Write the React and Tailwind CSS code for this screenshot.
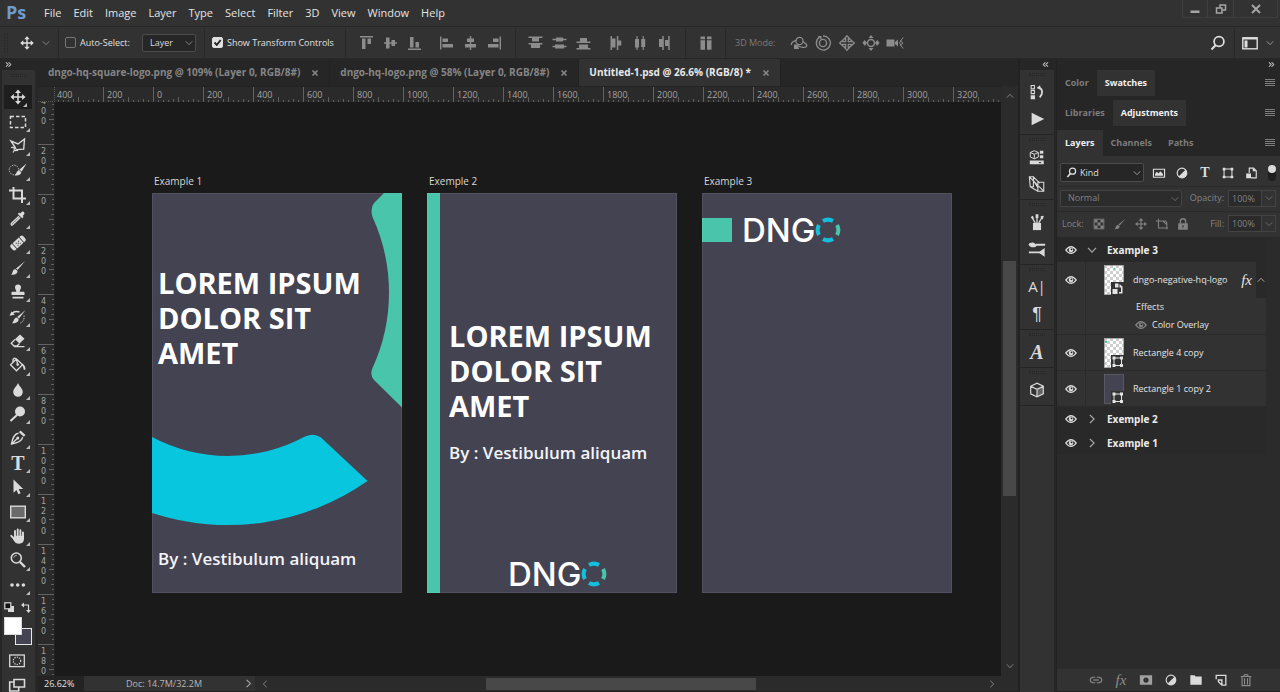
import { ChevronsLeft, ChevronsRight } from 'lucide-react'

const menus = ['File', 'Edit', 'Image', 'Layer', 'Type', 'Select', 'Filter', '3D', 'View', 'Window', 'Help']

const docTabs = [
  { name: 'dngo-hq-square-logo.png @ 109% (Layer 0, RGB/8#)' },
  { name: 'dngo-hq-logo.png @ 58% (Layer 0, RGB/8#)' },
  { name: 'Untitled-1.psd @ 26.6% (RGB/8) *', active: true },
]

const rulerX = [400, 200, 0, 200, 400, 600, 800, 1000, 1200, 1400, 1600, 1800, 2000, 2200, 2400, 2600, 2800, 3000, 3200]
const rulerY = [400, 200, 0, 200, 400, 600, 800, 1000, 1200, 1400, 1600, 1800]

const chevrons = {
  down: 'M.8 2.300L4 5.700l3.200-3.400',
  up: 'M.8 5.700L4 2.300l3.200 3.400',
  left: 'M5.700.8L2.300 4l3.400 3.200',
  right: 'M2.300.8L5.700 4 2.300 7.200',
}

function Icon({ size = 18, box = 18, className = '', children }) {
  return (
    <svg
      width={size}
      height={size}
      viewBox={`0 0 ${box} ${box}`}
      fill="currentColor"
      className={`shrink-0 ${className}`}
      aria-hidden="true"
    >
      {children}
    </svg>
  )
}

function Line({ d, w = 1.3, ...rest }) {
  return <path d={d} fill="none" stroke="currentColor" strokeWidth={w} {...rest} />
}

function Chevron({ dir = 'down', size = 8, className }) {
  return (
    <Icon size={size} box={8} className={className}>
      <Line d={chevrons[dir]} w={0.9} />
    </Icon>
  )
}

function MoveGlyph() {
  return (
    <>
      <Line d="M10 4.500v11M4.500 10h11" w={1.5} />
      <path d="M10 2.500l3 3.400H7zM10 17.500l3-3.400H7zM2.500 10l3.400-3v6zM17.500 10l-3.400-3v6z" />
    </>
  )
}

function BrushGlyph() {
  return (
    <>
      <path d="M17 3.200L9.500 12 8 10.600z" />
      <path d="M7.600 11.200l1.900 1.700c.2 2.400-2.600 4.200-6.500 3.800 1.500-.8 1.200-2.300 2-4 .6-1.100 1.600-1.500 2.600-1.500z" />
    </>
  )
}

/* toolbox, top to bottom, every glyph sits on a 20 x 20 grid */
const tools = [
  { name: 'Move', active: true, glyph: <MoveGlyph /> },
  {
    name: 'Marquee',
    glyph: <rect x="2.500" y="4.500" width="15" height="11" fill="none" stroke="currentColor" strokeWidth="1.500" strokeDasharray="3.500 2" />,
  },
  {
    name: 'Lasso',
    glyph: (
      <>
        <Line d="M7.500 12L3 5l7 3 6.500-5-.8 10.200-7.200.4M4 8.500" w={1.4} />
        <Line d="M3 11.500c3-.5 5.500 1 5.500 2.500s-3.500 0-2-1.500M8 14l2 .8M6.500 14L5 16.500" w={1.2} />
      </>
    ),
  },
  {
    name: 'Quick Selection',
    glyph: (
      <>
        <circle cx="6" cy="10" r="4.800" fill="none" stroke="currentColor" strokeDasharray="1.200 1.300" />
        <path d="M18.500 3.500l-4.800 8-2.400-1.700zM11 10.500l2.200 1.600c.2 2.500-2.500 3.900-6.600 3.400 1.900-.9 1.700-5 4.400-5z" />
      </>
    ),
  },
  { name: 'Crop', glyph: <Line d="M1 5.500h13V18M5.500 2v11.500h12.500" w={2} /> },
  {
    name: 'Eyedropper',
    glyph: (
      <>
        <path d="M12 4.500l2-1.700c1-1 3.200.8 2.300 2.200L14.800 7l.8.9-1.400 1.300-4.400-4.300 1.300-1.300z" />
        <Line d="M11 7.200L4.300 13.500c-1 1-1.700 1.500-1 2.300s1.400 0 2.300-1l6.600-6.400" w={1.4} />
      </>
    ),
  },
  {
    name: 'Healing Brush',
    glyph: (
      <g transform="rotate(-42 10 10)">
        <path d="M3.500 6.500H5v7H3.500a2 2 0 0 1-2-2v-3a2 2 0 0 1 2-2zM16.500 6.500H15v7h1.500a2 2 0 0 0 2-2v-3a2 2 0 0 0-2-2z" />
        <rect x="5.800" y="6.500" width="8.400" height="7" />
        <path d="M8 8.500h1v1H8zM11 8.500h1v1h-1zM9.500 9.800h1v1h-1zM8 11.200h1v1H8zM11 11.200h1v1h-1z" fill="#323232" />
      </g>
    ),
  },
  { name: 'Brush', glyph: <BrushGlyph /> },
  {
    name: 'Clone Stamp',
    glyph: <path d="M10 2.500a3 3 0 0 1 3 3c0 1.600-1.300 2.200-1.300 4.300h3.800c.8 0 1 .4 1 1V13h-13v-2.200c0-.6.200-1 1-1h3.800C8.300 7.700 7 7.100 7 5.500a3 3 0 0 1 3-3zM4.500 14.800h11v1.700h-11z" />,
  },
  {
    name: 'History Brush',
    glyph: (
      <>
        <path d="M17.500 3L11 11.500l-1.800-1.400zM8.600 10.500l2 1.600c.3 2.500-2 4.400-6.800 4.200 1.900-.9 1.900-5.400 4.800-5.800zM1.500 8.800l2-4.300 3.300 3.300z" />
        <Line d="M4 6.500c2-2.300 5-2.300 7.500-1.500" w={1.5} />
        <Line d="M16 8.500c.6 3.500-1 6.500-4 7.800" w={1} strokeDasharray="1.200 1.400" />
      </>
    ),
  },
  {
    name: 'Eraser',
    glyph: (
      <>
        <path d="M12 3.500l4.500 4.200-5 4.800-4.600-4.200z" />
        <Line d="M7 8.500l-3.800 3.700L6 15h3l2.500-2.500M6 15.600h10.500" w={1.3} />
      </>
    ),
  },
  {
    name: 'Paint Bucket',
    glyph: (
      <>
        <Line d="M8.500 4l6 5.800-6 6-6-6zM5 7c-.5-3 1-4.500 2.500-3.500S9 7 9.500 9" w={1.3} />
        <circle cx="9.700" cy="9.600" r="1.300" />
        <path d="M13 8.500c2 0 4 1.500 4.500 5 .2 1.800-1.800 2-2 .3-.2-2-.9-3.300-2.500-5.300z" />
      </>
    ),
  },
  { name: 'Blur', glyph: <path d="M10 3c1 3 4.800 5.500 4.800 9a4.800 4.800 0 0 1-9.600 0C5.200 8.500 9 6 10 3z" /> },
  {
    name: 'Dodge',
    glyph: (
      <>
        <circle cx="12" cy="7.500" r="5" />
        <Line d="M9 11l-6.500 6" w={2} />
      </>
    ),
  },
  {
    name: 'Pen',
    glyph: (
      <>
        <path d="M12.500 2.500l5 4.500-1.700 1.800-4.900-4.600z" />
        <Line d="M10.500 5.300C7.500 5.500 5 8 3.500 16c7.500-1.200 10.500-3.500 11.200-6.800M4 15.500l5-4.800" w={1.4} />
        <circle cx="9.800" cy="10" r="1.500" />
      </>
    ),
  },
  { name: 'Type', letter: true },
  { name: 'Path Selection', glyph: <path d="M5.500 2.500v13.200l3-2.700 1.900 4.200 2.200-1-1.900-4.100h4.500z" /> },
  {
    name: 'Rectangle',
    glyph: <rect x="2.700" y="4.200" width="14.600" height="11.600" fill="#6a6a6a" stroke="currentColor" strokeWidth="1.400" />,
  },
  {
    name: 'Hand',
    glyph: (
      <>
        <Line d="M7 11V5M9.700 10V3.500M12.400 10V4.200M15 11.500V6.500M6.500 13.500L3.300 9.800" w={1.9} strokeLinecap="round" />
        <path d="M6 9.800h10v2.700c0 3-1.500 5.200-4.800 5.200-2.700 0-4.200-1-5.400-3.200l-.8-1.500z" />
      </>
    ),
  },
  {
    name: 'Zoom',
    glyph: (
      <>
        <circle cx="8.300" cy="8" r="5" fill="none" stroke="currentColor" strokeWidth="1.600" />
        <Line d="M12 12l5 5" w={2.4} />
        <Line d="M5.800 7.500c.5-1.500 1.500-2 2.800-2" w={0.9} />
      </>
    ),
  },
  {
    name: 'Edit Toolbar',
    glyph: (
      <>
        <circle cx="4" cy="10" r="1.800" />
        <circle cx="9.700" cy="10" r="1.800" />
        <circle cx="15.400" cy="10" r="1.800" />
      </>
    ),
  },
]

const alignGroups = [
  [
    ['Align top edges', 'M3 2h13v1.400H3zM5 4.500h3.500V15H5zM10.500 4.500H14V10h-3.500z'],
    ['Align vertical centers', 'M3 8.300h13v1.400H3zM5 3.500h3.500v11H5zM10.500 6H14v6h-3.500z'],
    ['Align bottom edges', 'M3 14.500h13V16H3zM5 3h3.500v10.500H5zM10.500 8H14v5.500h-3.500z'],
  ],
  [
    ['Align left edges', 'M3 2.500h1.400v13H3zM5.500 4.500H11V8H5.500zM5.500 10H16v3.500H5.500z'],
    ['Align horizontal centers', 'M8.800 2h1.400v14H8.800zM6 4.500h7V8H6zM4 10h11v3.500H4z'],
    ['Align right edges', 'M14.600 2.500H16v13h-1.400zM8 4.500h5.500V8H8zM3 10h10.500v3.500H3z'],
  ],
]

const distributeGroups = [
  [
    ['Distribute top edges', 'M2.500 2.500h14V4h-14zM6 4h7v3.500H6zM2.500 9h14v1.500h-14zM5 10.500h9V14H5z'],
    ['Distribute vertical centers', 'M2.500 4.800h14v1.400h-14zM6 3.500h7v4H6zM2.500 11.800h14v1.400h-14zM5 10.500h9v4H5z'],
    ['Distribute bottom edges', 'M2.500 7.500h14V9h-14zM6 4h7v3.500H6zM2.500 14h14v1.500h-14zM5 10.500h9V14H5z'],
  ],
  [
    ['Distribute left edges', 'M3.500 2H5v14H3.500zM5 4.500h3.500v9H5zM9.800 2h1.500v14H9.800zM11.300 6.500h3v5h-3z'],
    ['Distribute horizontal centers', 'M5.400 2h1.200v14H5.400zM4 5h4v8.500H4zM11.600 2h1.200v14h-1.200zM10.200 5h4v8h-4z'],
    ['Distribute right edges', 'M7.300 2h1.500v14H7.300zM4 5h3.300v8H4zM13.200 2h1.500v14h-1.500zM10 6h3.200v6H10z'],
  ],
]

const modes3d = [
  [
    'Orbit',
    <>
      <circle cx="9.500" cy="7" r="3.600" fill="none" stroke="currentColor" strokeWidth="1.200" />
      <Line d="M6.500 6.500C3 7 .8 9 1.500 11M12.500 7.500c3 1.500 5 3.500 4 5s-6 1-9-1" w={1.3} />
      <path d="M4 10.500h3.500L9 15H4z" />
    </>,
  ],
  [
    'Roll',
    <>
      <circle cx="9" cy="9" r="3.600" fill="none" stroke="currentColor" strokeWidth="1.400" />
      <Line d="M5 3.500A7 7 0 1 0 9 2" w={1.3} />
      <path d="M3.500 2h4v4z" />
    </>,
  ],
  ['Pan', <Line key="p" d="M7.700 7.700V5H6L9 1.700 12 5h-1.700v2.700H13V6l3.300 3-3.300 3v-1.700h-2.700V13H12l-3 3.300L6 13h1.700v-2.700H5V12L1.700 9 5 6v1.700z" w={1.3} />],
  [
    'Slide',
    <>
      <circle cx="9" cy="9" r="3.500" fill="none" stroke="currentColor" strokeWidth="1.500" />
      <path d="M9 1l2.500 3h-5zM9 17l2.500-3h-5zM.5 9l2-3 2.500 2.500L3 12zM17.500 9l-2-3L13 8.500l2 3.500z" />
    </>,
  ],
  [
    'Camera',
    <>
      <path d="M.5 5.500h8v7h-8zM9 8l3-2.500v7L9 10z" />
      <Line d="M17 3.500L13.500 9l3.500 5.500M14 6.500l3 2.500-3 2.500" w={1} />
    </>,
  ],
]

/* icon groups of the collapsed dock */
const dock = [
  [
    [
      'History',
      <>
        <Line d="M3.500 2.700h3.600v3.600H3.500zM3.500 8.200h3.600v3.600H3.500z" w={1.2} />
        <path d="M3 13.500h4.800V18H3zM9.500 5.500l4-3 .5 5z" />
        <Line d="M12.500 5c4 2 4.300 7 .5 11" w={2} />
      </>,
    ],
    ['Actions', <path key="a" d="M4 3l14 7-14 7z" />],
  ],
  [
    [
      'Properties',
      <>
        <Line d="M2.500 5l4.500-2 4.500 2v5L7 12l-4.500-2zM2.500 5L7 7l4.500-2M7 7v5" w={1.1} />
        <path d="M13.200 3H17v3.500h-3.800zM13.200 8H17v3.500h-3.800zM2 14h15.500v4H2z" />
        <path d="M11.500 15.500h3.500l-1.700 1.700z" fill="#323232" />
      </>,
    ],
    ['Info', <Line key="i" d="M1.500 2h4.500v11H2.500zM6 2l7 7M2.500 13l8.500 5M11 8h6.500v10H11zM6 6l5 8M1.500 2l16 16" w={1.2} />],
  ],
  [
    [
      'Brushes',
      <>
        <path d="M5.500 11h9v8h-9z" />
        <Line d="M8 11L4.500 5M10 11V4M12 11l3.500-6" w={1.4} />
        <path d="M3 4.500l2.500-1.500 1 3-1.700 1zM8.500 1.500h3v4h-3zM14 3.500L17.500 3l-1 4-2-.5z" />
      </>,
    ],
    [
      'Brush Presets',
      <>
        <path d="M.5 5C2 2 6.500 2 8.500 4.500L10 6c-2 3-7.500 3-9.500-1zM11.500 14l7-5v9.500z" />
        <Line d="M9 5.300h10M1 13.800h12" w={2} />
      </>,
    ],
  ],
  [
    ['Character', 'A|'],
    ['Paragraph', '¶'],
  ],
  [['Glyphs', 'A']],
  [
    [
      '3D',
      <>
        <Line d="M3 5.800L10 2.500l7 3.300v8.400l-7 3.300-7-3.300zM3 5.800l7 3.400 7-3.400M10 9.200v8.300" w={1.3} />
        <path d="M10 9.200l7-3.400v8.400l-7 3.300z" opacity=".3" />
      </>,
    ],
  ],
]

const dockText = {
  'A|': 'font-["Open_Sans"] text-[15px]',
  '¶': 'font-["Liberation_Sans"] text-[18px]',
  A: 'font-["Liberation_Serif"] text-[20px] font-bold italic',
}

function Tip() {
  return (
    <svg width="4" height="4" viewBox="0 0 4 4" className="absolute right-[5px] bottom-[2px]" fill="#bdbdbd" aria-hidden="true">
      <path d="M4 0v4H0z" />
    </svg>
  )
}

function Sep() {
  return <span className="h-[30px] w-px shrink-0 bg-[#282828]" />
}

function Tick({ label, checked, className }) {
  return (
    <label className={`flex shrink-0 items-center gap-1 text-[9px] font-medium whitespace-nowrap text-[#e0e0e0] ${className}`}>
      <span className="relative flex size-[11px] shrink-0">
        <input
          type="checkbox"
          defaultChecked={checked}
          className="peer size-[11px] appearance-none rounded-[2px] border border-[#757575] checked:border-[#e0e0e0] checked:bg-[#e0e0e0]"
        />
        <svg viewBox="0 0 11 11" className="pointer-events-none absolute inset-0 hidden size-[11px] peer-checked:block" aria-hidden="true">
          <path d="M2.500 5.500l2.300 2.300L8.700 3" fill="none" stroke="#222" strokeWidth="1.800" />
        </svg>
      </span>
      {label}
    </label>
  )
}

function MenuBar() {
  return (
    <header className="flex h-[27px] shrink-0 items-start justify-between border-b border-[#262626] bg-[#323232]">
      <div className="flex h-[26px] items-center">
        <span className="w-[37px] pb-[3px] pl-[6px] text-[18px] leading-none font-bold text-[#6f9bcc]">Ps</span>
        <nav className="flex gap-3 pl-[7px] text-[11px] text-[#e4e4e4]">
          {menus.map((m) => (
            <button key={m} type="button">{m}</button>
          ))}
        </nav>
      </div>
      <div className="mr-[2px] flex h-[18px] border-x border-b border-[#3e3e3e] text-[#a5a5a5]">
        <button type="button" aria-label="Minimize" className="flex w-[25px] items-center justify-center border-r border-[#3e3e3e]">
          <Icon size={12} box={12}><path d="M1.500 7.500h9v2.500h-9z" /></Icon>
        </button>
        <button type="button" aria-label="Restore" className="flex w-[26px] items-center justify-center border-r border-[#3e3e3e]">
          <Icon size={12} box={12}><Line d="M1.500 5h5.500v5H1.500zM5 5V2h5.500v5H7" w={1.5} /></Icon>
        </button>
        <button type="button" aria-label="Close" className="flex w-[43px] items-center justify-center">
          <Icon size={12} box={12}><Line d="M2 2l8 8M10 2l-8 8" w={2} /></Icon>
        </button>
      </div>
    </header>
  )
}

function IconGroup({ items, className }) {
  return (
    <div className={`flex shrink-0 gap-[6px] ${className}`}>
      {items.map(([name, d]) => (
        <button key={name} type="button" aria-label={name}>
          <Icon>{typeof d === 'string' ? <path d={d} /> : d}</Icon>
        </button>
      ))}
    </div>
  )
}

function OptionsBar() {
  return (
    <div className="flex h-8 shrink-0 items-center border-b border-[#272727] bg-[#323232] text-[#8c8c8c]">
      <span className="ml-1 h-5 w-1 shrink-0 border-x border-dotted border-[#262626]" />
      <Icon size={18} box={20} className="ml-[10px] text-[#e2e2e2]"><MoveGlyph /></Icon>
      <Chevron className="mr-2 ml-[6px]" />
      <Sep />
      <Tick label="Auto-Select:" className="ml-[6px] w-[69px]" />
      <div className="relative mx-2 shrink-0">
        <select aria-label="Auto-select target" className="block h-[18px] w-[54px] appearance-none rounded-[2px] border border-[#4c4c4c] bg-[#262626] pl-[7px] text-[9px] text-[#dadada]">
          <option>Layer</option>
        </select>
        <Chevron className="pointer-events-none absolute top-[5px] right-[3px]" />
      </div>
      <Sep />
      <Tick label="Show Transform Controls" checked className="mr-2 ml-[7px] w-[125px]" />
      <Sep />
      <IconGroup items={alignGroups[0]} className="ml-[11px]" />
      <IconGroup items={alignGroups[1]} className="mr-3 ml-[14px]" />
      <Sep />
      <IconGroup items={distributeGroups[0]} className="ml-[10px]" />
      <IconGroup items={distributeGroups[1]} className="mr-3 ml-[15px]" />
      <Sep />
      <button type="button" aria-label="Auto-align layers" className="mr-[10px] ml-[11px]">
        <Icon><path d="M3.500 2.500H8v2.700H3.500zM3.500 6.200H8v9.600H3.500zM10 2.500h4.500v2.700H10zM10 6.200h4.500v9.600H10z" /></Icon>
      </button>
      <Sep />
      <span className="ml-[9px] w-[55px] shrink-0 text-[9px] text-[#7a7a7a]">3D Mode:</span>
      <IconGroup items={modes3d} className="" />
      <div className="ml-auto flex shrink-0 items-center pr-[6px] text-[#dedede]">
        <button type="button" aria-label="Search" className="mr-2">
          <Icon size={16} box={16}>
            <circle cx="9" cy="6.500" r="4.900" fill="none" stroke="currentColor" strokeWidth="1.700" />
            <Line d="M5.800 10l-4.300 4.500" w={2} />
          </Icon>
        </button>
        <Sep />
        <button type="button" aria-label="Workspace" className="ml-[7px] flex items-center gap-2">
          <Icon size={16} box={16}>
            <rect x=".8" y="2.800" width="14.400" height="11" fill="none" stroke="currentColor" strokeWidth="1.400" />
            <path d="M1 2.500h14v2H1zM2.500 5.500h3v7h-3z" />
          </Icon>
          <Chevron className="text-[#a0a0a0]" />
        </button>
      </div>
    </div>
  )
}

function Toolbox() {
  return (
    <aside className="flex w-[38px] shrink-0 flex-col pl-[2px]">
      <div className="flex h-[11px] items-center pl-[2px] text-[#b0b0b0]">
        <ChevronsRight size={9} strokeWidth={3} />
      </div>
      <div className="flex min-h-0 w-[34px] flex-1 flex-col border-r border-[#292929] bg-[#323232] text-[#dadada]">
        <div className="flex h-[15px] shrink-0 justify-center pt-1">
          <span className="h-[3px] w-4 border-y border-dotted border-[#262626]" />
        </div>
        <div className="flex min-h-0 flex-1 flex-col">
          {tools.map((t) => (
            <button
              key={t.name}
              type="button"
              aria-label={`${t.name} Tool`}
              className={`relative flex min-h-0 flex-1 items-center ${t.active ? 'mr-[3px] ml-[2px] bg-[#1e1e1e] pl-1' : 'pl-[6px]'}`}
            >
              {t.letter ? (
                <span className="w-5 text-center font-['Liberation_Serif'] text-[20px] leading-none font-bold">T</span>
              ) : (
                <Icon size={20} box={20}>{t.glyph}</Icon>
              )}
              <Tip />
            </button>
          ))}
        </div>
        <div className="flex h-[95px] shrink-0 flex-col pl-[2px]">
          <div className="flex h-[20px] items-center gap-[6px]">
            <Icon size={11} box={11}>
              <path d="M4 4h6v6H4z" />
              <rect x=".8" y=".8" width="6" height="6" fill="#111" stroke="currentColor" strokeWidth="1.200" />
            </Icon>
            <Icon size={11} box={11}>
              <Line d="M2 3h5.500v5.500" w={1.2} />
              <path d="M0 3l3-2.500v5zM7.500 11l-2.500-3h5z" />
            </Icon>
          </div>
          <div className="relative h-[30px] w-7">
            <button type="button" aria-label="Background color" className="absolute right-0 bottom-[2px] size-[17px] border border-[#e8e8e8] bg-[#444352]" />
            <button type="button" aria-label="Foreground color" className="absolute top-0 left-0 size-[18px] border border-[#dadada] bg-white" />
          </div>
          <button type="button" aria-label="Quick Mask" className="mt-[4px] ml-1 h-5">
            <Icon size={18} box={18}>
              <rect x="1.700" y="3" width="14.600" height="11.600" fill="none" stroke="currentColor" strokeWidth="1.300" />
              <circle cx="9" cy="8.800" r="3.700" fill="none" stroke="currentColor" strokeWidth="1.200" strokeDasharray="1.200 1.200" />
            </Icon>
          </button>
          <button type="button" aria-label="Screen Mode" className="mt-1 ml-1 h-4">
            <Icon size={18} box={18}>
              <Line d="M6 7H1.700v9h9v-4M6 4.500h10.500V12H6z" w={1.6} />
            </Icon>
          </button>
        </div>
      </div>
    </aside>
  )
}

function RulerX() {
  return (
    <div className="flex h-4 shrink-0 border-t border-[#222] bg-[#2a2a2a]">
      <div className="w-[17px] shrink-0 border-r border-b border-dotted border-[#5c5c5c]" />
      <div className="flex min-w-0 flex-1 overflow-hidden">
        <div className="-ml-[2px] flex">
          {rulerX.map((n, i) => (
            <div key={i} className="relative h-[15px] w-[50px] shrink-0 border-l border-[#626262] pl-[3px] text-[9px] leading-[16px] text-[#a4a4a4]">
              <svg width="50" height="15" className="absolute inset-0" aria-hidden="true">
                <path d="M5 13v2M10 13v2M15 13v2M20 12v3M25 10v5M30 13v2M35 13v2M40 12v3M45 13v2" transform="translate(-.5 0)" stroke="#5e5e5e" />
              </svg>
              <span className="relative">{n}</span>
            </div>
          ))}
        </div>
      </div>
    </div>
  )
}

function RulerY() {
  return (
    <div className="w-[17px] shrink-0 overflow-hidden border-r border-[#222] bg-[#2a2a2a]">
      <div className="-mt-2 flex flex-col">
        {rulerY.map((n, i) => (
          <div key={i} className="relative h-[50px] shrink-0 border-t border-[#626262] pt-[2px] pl-[3px] font-['DejaVu_Sans'] text-[8px] leading-[10px] text-[#a4a4a4]">
            <svg width="17" height="50" className="absolute inset-0" aria-hidden="true">
              <path d="M14 5h2M14 10h2M14 15h2M13 20h3M11 25h5M14 30h2M14 35h2M13 40h3M14 45h2" transform="translate(0 -.5)" stroke="#5e5e5e" />
            </svg>
            <span className="relative flex flex-col">
              {String(n).split('').map((c, k) => (
                <span key={k}>{c}</span>
              ))}
            </span>
          </div>
        ))}
      </div>
    </div>
  )
}

function Logo() {
  return (
    <div className="flex h-6 items-center text-white">
      <span className="font-['Inter'] text-[33px] leading-6 font-medium">DNG</span>
      <svg width="26" height="26" viewBox="0 0 26 26" fill="none" strokeWidth="4" aria-hidden="true">
        <path d="M22 8a10.300 10.300 0 0 1 0 10" stroke="#48c5ab" />
        <path d="M22 8a10.300 10.300 0 0 1 0 10" stroke="#12c0dc" transform="rotate(90 13 13)" />
        <path d="M22 8a10.300 10.300 0 0 1 0 10" stroke="#12c0dc" transform="rotate(180 13 13)" />
        <path d="M22 8a10.300 10.300 0 0 1 0 10" stroke="#12c0dc" transform="rotate(270 13 13)" />
      </svg>
    </div>
  )
}

function Artboard({ title, children }) {
  return (
    <section className="shrink-0">
      <h2 className="mb-1 h-[15px] pl-[2px] text-[10px] leading-[15px] text-[#d8d8d8]">{title}</h2>
      <div className="relative h-[400px] w-[250px] overflow-hidden bg-[#444352] outline -outline-offset-1 outline-[#ffffff14]">
        {children}
      </div>
    </section>
  )
}

function Headline() {
  return (
    <p className="text-[29px] leading-[35px] font-bold text-white">
      LOREM IPSUM<br />DOLOR SIT<br />AMET
    </p>
  )
}

function Byline() {
  return <p className="text-[17px] leading-6 font-semibold text-[#f4f4f8]">By : Vestibulum aliquam</p>
}

function Canvas() {
  return (
    <div className="flex min-w-0 flex-1 gap-[25px] overflow-hidden bg-[#1a1a1a] pt-[72px] pl-[97px]">
      <Artboard title="Example 1">
        <svg viewBox="0 0 250 400" className="absolute inset-0 size-full" aria-hidden="true">
          <path d="M232 0l-10 10q-4 5-1.500 14A181 181 0 0 1 220.500 175q-3 7 1.500 12L250 214.500V0z" fill="#48c5ab" />
          <path d="M0 244A162 162 0 0 0 153 243.500Q162 239.500 169 244.500L215.500 288A244 244 0 0 1 0 320z" fill="#07c6de" />
        </svg>
        <div className="relative flex h-full flex-col justify-between pt-[72px] pb-[22px] pl-[6px]">
          <Headline />
          <Byline />
        </div>
      </Artboard>
      <Artboard title="Exemple 2">
        <div className="flex h-full border-l-[13px] border-[#48c5ab]">
          <div className="flex flex-1 flex-col justify-between pt-[125px] pb-[7px]">
            <div className="flex flex-col gap-[18px] pl-[9px]">
              <Headline />
              <Byline />
            </div>
            <div className="pl-[68px]"><Logo /></div>
          </div>
        </div>
      </Artboard>
      <Artboard title="Example 3">
        <div className="flex gap-[10px] pt-[25px]">
          <span className="h-6 w-[30px] bg-[#48c5ab]" />
          <Logo />
        </div>
      </Artboard>
    </div>
  )
}

function DocumentArea() {
  return (
    <main className="flex min-w-0 flex-1 flex-col bg-[#262626]">
      <div role="tablist" className="flex h-[27px] shrink-0">
        {docTabs.map((t) => (
          <div
            key={t.name}
            className={`flex shrink-0 items-center gap-[11px] border-r border-[#222] px-[10px] text-[10px] font-bold ${t.active ? 'bg-[#323232] text-[#e8e8e8]' : 'text-[#858585]'}`}
          >
            <button type="button" role="tab" aria-selected={!!t.active}>{t.name}</button>
            <button type="button" aria-label="Close tab" className="text-[#858585]">
              <Icon size={8} box={8}><Line d="M1.500 1.500l5 5M6.500 1.500l-5 5" w={1.7} /></Icon>
            </button>
          </div>
        ))}
      </div>
      <div className="flex min-h-0 flex-1">
        <div className="flex min-w-0 flex-1 flex-col">
          <RulerX />
          <div className="flex min-h-0 flex-1">
            <RulerY />
            <Canvas />
          </div>
        </div>
        <div className="flex w-[17px] shrink-0 flex-col items-center bg-[#2b2b2b] py-[6px] text-[#8c8c8c]">
          <Chevron dir="up" />
          <div className="flex w-full flex-1 flex-col px-[2px]">
            <div className="flex-[161]" />
            <div className="flex-[235] bg-[#484848]" />
            <div className="flex-[166]" />
          </div>
          <Chevron />
        </div>
      </div>
      <div className="flex h-4 shrink-0 items-center border-b border-[#222] bg-[#2b2b2b] text-[9px] text-[#b4b4b4]">
        <span className="w-[46px] shrink-0 bg-[#232323] pl-[6px] leading-[15px] text-[#e0e0e0]">26.62%</span>
        <div className="flex h-full w-[171px] shrink-0 items-center justify-between bg-[#323232] pr-[2px] pl-[42px] leading-[15px]">
          Doc: 14.7M/32.2M
          <Chevron dir="right" size={9} />
        </div>
        <Chevron dir="left" className="ml-[6px] text-[#8c8c8c]" />
        <div className="flex h-3 flex-1">
          <div className="flex-[217]" />
          <div className="flex-[270] rounded-[1px] bg-[#484848]" />
          <div className="flex-[232]" />
        </div>
        <Chevron dir="right" className="mr-[22px] text-[#8c8c8c]" />
      </div>
    </main>
  )
}

function Dock() {
  return (
    <aside className="flex w-[38px] shrink-0 flex-col border-l-2 border-[#222] pr-[2px]">
      <div className="flex h-[11px] items-center justify-end pr-1 text-[#b0b0b0]">
        <ChevronsLeft size={9} strokeWidth={3} />
      </div>
      <div className="flex flex-1 flex-col bg-[#323232] text-[#dadada]">
        {dock.map((group, i) => (
          <div key={i} className="flex flex-col items-center border-b border-[#242424] pb-[2px]">
            <span className="mt-[3px] mb-[2px] h-[3px] w-4 border-y border-dotted border-[#262626]" />
            {group.map(([name, glyph]) => (
              <button key={name} type="button" aria-label={name} className="flex h-[27px] items-center">
                {typeof glyph === 'string' ? (
                  <span className={`leading-none ${dockText[glyph]}`}>{glyph}</span>
                ) : (
                  <Icon size={18} box={20}>{glyph}</Icon>
                )}
              </button>
            ))}
          </div>
        ))}
      </div>
    </aside>
  )
}

function PanelTabs({ tabs, active, last }) {
  return (
    <div className={`flex shrink-0 items-center justify-between ${last ? 'h-[26px]' : 'h-[30px] pb-1'}`}>
      <div role="tablist" className="flex h-full">
        {tabs.map((t) => (
          <button
            key={t}
            type="button"
            role="tab"
            aria-selected={t === active}
            className={`px-2 text-[9px] font-bold ${t === active ? 'bg-[#323232] text-[#f0f0f0]' : 'text-[#7d7d7d]'}`}
          >
            {t}
          </button>
        ))}
      </div>
      <button type="button" aria-label="Panel menu" className="mr-[5px] text-[#7d7d7d]">
        <Icon size={10} box={10}><path d="M0 1h10v1H0zM0 3h10v1H0zM0 5h10v1H0zM0 7h10v1H0z" /></Icon>
      </button>
    </div>
  )
}

const filters = [
  ['Pixel layers', <path key="a" fillRule="evenodd" d="M1 3h14v10.500H1zM2.300 4.300v8h11.400v-8zM3.500 11V9l2-2.500 2 2 2-2.500 3 3v2z" />],
  [
    'Adjustment layers',
    <>
      <circle cx="8" cy="8" r="5.500" fill="none" stroke="currentColor" strokeWidth="1.300" />
      <path d="M12 4.200A5.500 5.500 0 0 1 4.200 12z" />
    </>,
  ],
  ['Type layers', 'T'],
  [
    'Shape layers',
    <>
      <Line d="M3.500 3.500h9v9h-9z" w={1.2} />
      <path d="M2 2h3v3H2zM11 2h3v3h-3zM2 11h3v3H2zM11 11h3v3h-3z" />
    </>,
  ],
  [
    'Smart objects',
    <>
      <Line d="M6 8V2.500h5l3 3v8H8" w={1.3} />
      <path d="M2.500 8.500H8V14H2.500zM10 2v4h4z" />
    </>,
  ],
]

const locks = [
  [
    'Lock transparency',
    <>
      <Line d="M2.500 2.500h11v11h-11z" w={1.1} />
      <path d="M3 3h3.300v3.300H3zM9.700 3H13v3.300H9.700zM6.300 6.300h3.400v3.400H6.300zM3 9.700h3.300V13H3zM9.700 9.700H13V13H9.700z" />
    </>,
  ],
  ['Lock pixels', <g key="b" transform="translate(-1 -1) scale(.9)"><BrushGlyph /></g>],
  ['Lock position', <g key="m" transform="translate(-1 -1) scale(.9)"><MoveGlyph /></g>],
  ['Lock artboard', <Line key="c" d="M1 4.500h11l1.500 2V14M4 2v10.500h11M9 4.500l4 4" w={1.2} />],
  [
    'Lock all',
    <>
      <path fillRule="evenodd" d="M2.500 7h11v7.500h-11zM7.300 9.500v2.500h1.400V9.500z" />
      <Line d="M5 7V5a3 3 0 0 1 6 0v2" w={1.5} />
    </>,
  ],
]

function Eye({ dim }) {
  return (
    <svg width="12" height="10" viewBox="0 0 12 10" className={`shrink-0 ${dim ? 'text-[#858585]' : 'text-[#dcdcdc]'}`} fill="currentColor" aria-hidden="true">
      <path fillRule="evenodd" d="M0 5C2 2.200 4 1 6 1s4 1.200 6 4C10 7.800 8 9 6 9S2 7.800 0 5zm1.800 0C3 6.800 4.200 7.600 6 7.600S9 6.800 10.200 5C9 3.200 7.800 2.400 6 2.400S3 3.200 1.800 5z" />
      <circle cx="6" cy="5" r="2.300" />
      <circle cx="6.500" cy="4.300" r=".9" fill="#222" />
    </svg>
  )
}

function EyeCell() {
  return (
    <button type="button" aria-label="Toggle visibility" className="flex w-[28px] shrink-0 items-center justify-center">
      <Eye />
    </button>
  )
}

function GroupRow({ name, open }) {
  return (
    <div className="flex h-6 bg-[#292929]">
      <EyeCell />
      <button type="button" aria-expanded={!!open} className="flex items-center gap-[10px] pl-[2px] text-[10px] font-bold text-[#ececec]">
        <Chevron dir={open ? 'down' : 'right'} size={10} className="text-[#a8a8a8]" />
        {name}
      </button>
    </div>
  )
}

function Thumb({ solid, smart }) {
  return (
    <svg width="20" height="30" viewBox="0 0 20 30" className="shrink-0" aria-hidden="true">
      <defs>
        <pattern id="checker" width="6" height="6" patternUnits="userSpaceOnUse">
          <path d="M0 0h6v6H0z" fill="#fff" />
          <path d="M0 0h3v3H0zM3 3h3v3H3z" fill="#cfcfcf" />
        </pattern>
      </defs>
      <rect x=".5" y=".5" width="19" height="29" fill={solid ? '#444352' : 'url(#checker)'} stroke={solid ? '#6d6d78' : '#bbb'} strokeWidth=".6" />
      {!solid && <path d={smart ? 'M9 4l2-1.500v2z' : 'M1 3h2v2H1z'} fill="#48c5ab" />}
      <path d="M7 17h13v13H7z" fill="#323232" />
      {smart ? (
        <path d="M8.500 24h5v5h-5zM11 18.500h3.500v4H11zM15.500 19l3 2.500v7H15v-1.500h2v-4.500h-1.500z" fill="#e4e4e4" />
      ) : (
        <>
          <path d="M10 20h7.500v7.500H10z" fill="none" stroke="#e4e4e4" />
          <path d="M8.500 18.500h3v3h-3zM16 18.500h3v3h-3zM8.500 26h3v3h-3zM16 26h3v3h-3z" fill="#e4e4e4" />
        </>
      )}
    </svg>
  )
}

function LayerRow({ name, solid, smart }) {
  return (
    <div className={`flex h-9 bg-[#323232] ${smart ? '' : 'border-t border-[#2a2a2a]'}`}>
      <EyeCell />
      <div className="flex min-w-0 flex-1 items-center border-l border-[#2a2a2a] pl-[18px] text-[9px] font-medium text-[#e4e4e4]">
        <Thumb solid={solid} smart={smart} />
        <span className="flex-1 truncate pl-[9px]">{name}</span>
        {smart && (
          <>
            <span className="pr-1 font-['Liberation_Serif'] text-[15px] leading-none italic">fx</span>
            <span className="flex h-full w-[10px] items-center justify-center bg-[#292929] text-[#b0b0b0]">
              <Chevron dir="up" />
            </span>
          </>
        )}
      </div>
    </div>
  )
}

function Percent({ id, label }) {
  return (
    <div className="ml-auto flex items-center pr-1">
      <label htmlFor={id} className="pr-1">{label}</label>
      <input id={id} defaultValue="100%" className="h-[17px] w-[34px] border border-[#434343] bg-[#2a2a2a] pl-[3px] text-[9px]" />
      <button type="button" aria-label={`${label} slider`} className="flex h-[17px] w-[14px] items-center justify-center border border-l-0 border-[#434343] text-[#707070]">
        <Chevron />
      </button>
    </div>
  )
}

function Panels() {
  return (
    <aside className="flex w-[224px] shrink-0 flex-col border-l border-[#222] bg-[#262626]">
      <div className="flex h-[11px] shrink-0 items-center justify-end pr-1 text-[#b0b0b0]">
        <ChevronsRight size={9} strokeWidth={3} />
      </div>
      <PanelTabs tabs={['Color', 'Swatches']} active="Swatches" />
      <PanelTabs tabs={['Libraries', 'Adjustments']} active="Adjustments" />
      <PanelTabs tabs={['Layers', 'Channels', 'Paths']} active="Layers" last />

      <div className="shrink-0 bg-[#323232] text-[9px] text-[#828282]">
        <div className="flex h-[31px] items-center border-b border-[#292929] pt-[3px] pl-[3px] text-[#dedede]">
          <div className="relative">
            <select aria-label="Filter kind" className="block h-[19px] w-[84px] appearance-none rounded-[2px] border border-[#4c4c4c] bg-[#262626] pl-[19px] text-[9px]">
              <option>Kind</option>
            </select>
            <Icon size={11} box={16} className="pointer-events-none absolute top-1 left-[6px]">
              <circle cx="9.500" cy="6" r="4.500" fill="none" stroke="currentColor" strokeWidth="1.800" />
              <Line d="M6.500 9.500L2 14.500" w={2.4} />
            </Icon>
            <Chevron className="pointer-events-none absolute top-[6px] right-[3px] text-[#a0a0a0]" />
          </div>
          <div className="flex items-center gap-[9px] pl-2">
            {filters.map(([name, glyph]) => (
              <button key={name} type="button" aria-label={name}>
                {typeof glyph === 'string' ? (
                  <span className="block w-[14px] font-['Liberation_Serif'] text-[14px] leading-none font-bold">{glyph}</span>
                ) : (
                  <Icon size={14} box={16}>{glyph}</Icon>
                )}
              </button>
            ))}
          </div>
          <button type="button" aria-label="Toggle filtering" className="mr-1 ml-auto flex h-4 w-2 justify-center rounded-full bg-[#1e1e1e]">
            <span className="size-2 rounded-full bg-[#dadada]" />
          </button>
        </div>
        <div className="flex h-[25px] items-center border-b border-[#292929] pb-[2px] pl-[3px]">
          <div className="relative">
            <select aria-label="Blend mode" className="block h-[17px] w-[122px] appearance-none rounded-[2px] border border-[#434343] bg-[#2c2c2c] pl-[7px] text-[9px]">
              <option>Normal</option>
            </select>
            <Chevron className="pointer-events-none absolute top-[5px] right-[3px] text-[#707070]" />
          </div>
          <Percent id="opacity" label="Opacity:" />
        </div>
        <div className="flex h-[26px] items-center border-b border-[#292929] pb-[2px] pl-[5px]">
          Lock:
          <div className="flex items-center gap-[7px] pl-2">
            {locks.map(([name, glyph]) => (
              <button key={name} type="button" aria-label={name}>
                <Icon size={14} box={16}>{glyph}</Icon>
              </button>
            ))}
          </div>
          <Percent id="fill" label="Fill:" />
        </div>
      </div>

      <div className="min-h-0 flex-1 overflow-hidden bg-[#2b2b2b] pr-[14px]">
        <GroupRow name="Example 3" open />
        <LayerRow name="dngo-negative-hq-logo" smart />
        <div className="flex h-9 bg-[#323232] text-[9px] font-medium text-[#e4e4e4]">
          <span className="w-[28px] shrink-0" />
          <div className="flex-1 border-l border-[#2a2a2a] leading-[18px]">
            <p className="pl-[50px]">Effects</p>
            <p className="flex items-center gap-[5px] pl-[49px]"><Eye dim />Color Overlay</p>
          </div>
        </div>
        <LayerRow name="Rectangle 4 copy" />
        <LayerRow name="Rectangle 1 copy 2" solid />
        <div className="pt-px">
          <GroupRow name="Exemple 2" />
          <GroupRow name="Example 1" />
        </div>
      </div>

      <div className="flex h-[23px] shrink-0 items-center gap-[11px] border-b border-[#222] bg-[#323232] pl-8 text-[#dadada]">
        <button type="button" aria-label="Link layers" className="text-[#7d7d7d]">
          <Icon size={14} box={16}><Line d="M7 5H4.500a3 3 0 0 0 0 6H7M9 5h2.500a3 3 0 0 1 0 6H9M5 8h6" w={1.5} /></Icon>
        </button>
        <button type="button" aria-label="Layer style" className="w-[14px] font-['Liberation_Serif'] text-[15px] leading-none text-[#8c8c8c] italic">fx</button>
        <button type="button" aria-label="Add mask" className="text-[#a0a0a0]">
          <Icon size={14} box={16}><path fillRule="evenodd" d="M1 2.500h14v11H1zM8 5a3 3 0 1 0 0 6 3 3 0 0 0 0-6z" /></Icon>
        </button>
        <button type="button" aria-label="New adjustment layer"><Icon size={14} box={16}>{filters[1][1]}</Icon></button>
        <button type="button" aria-label="New group">
          <Icon size={14} box={16}><path d="M1.500 2.500h5l1 1.500h7v9.500h-13zM1.500 4.500h13" /></Icon>
        </button>
        <button type="button" aria-label="New layer">
          <Icon size={14} box={16}><Line d="M2.500 7V2.800h11v11H9L5 10V8h4v5.500" w={1.5} /></Icon>
        </button>
        <button type="button" aria-label="Delete layer" className="text-[#8c8c8c]">
          <Icon size={14} box={16}><Line d="M2 4h12M6 4V2h4v2M3.500 4v10.500h9V4M6.300 6v7M9.700 6v7" w={1.3} /></Icon>
        </button>
      </div>
    </aside>
  )
}

export default function App() {
  return (
    <div className="flex h-screen w-full flex-col overflow-hidden bg-[#262626] font-['Open_Sans',sans-serif] select-none">
      <MenuBar />
      <OptionsBar />
      <div className="flex min-h-0 flex-1">
        <Toolbox />
        <DocumentArea />
        <Dock />
        <Panels />
      </div>
    </div>
  )
}
